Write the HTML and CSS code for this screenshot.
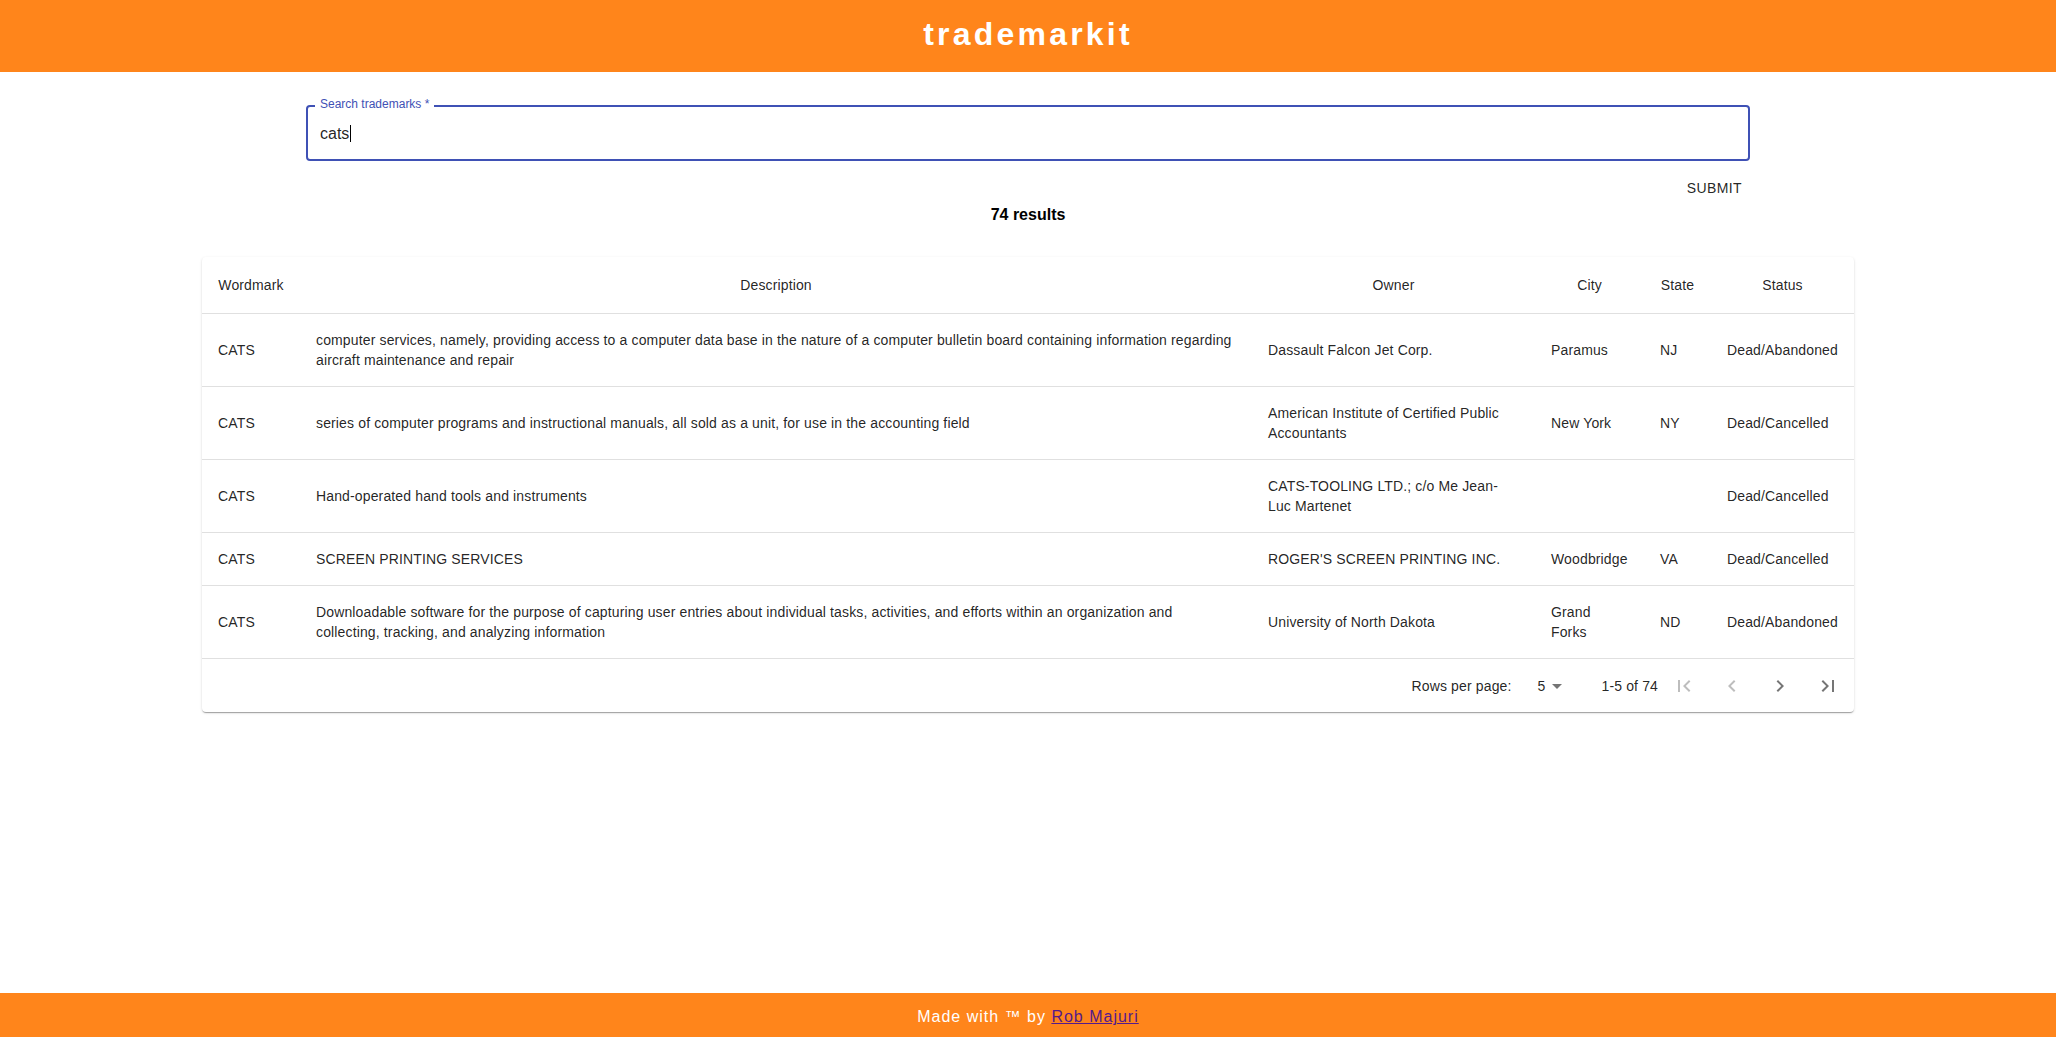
FILE: index.html
```html
<!DOCTYPE html>
<html lang="en">
<head>
<meta charset="utf-8">
<title>trademarkit</title>
<link rel="stylesheet" href="styles.css">
</head>
<body>
<header class="app-header">
  <h1 class="brand">trademarkit</h1>
</header>
<main class="content">
  <form class="search">
    <div class="field">
      <span class="field-label">Search trademarks *</span>
      <div class="field-value">cats<span class="caret"></span></div>
    </div>
    <div class="search-actions">
      <button type="button" class="submit">Submit</button>
    </div>
  </form>
  <p class="count">74 results</p>
  <div class="paper">
    <table class="results">
      <colgroup>
        <col class="c-word">
        <col class="c-desc">
        <col class="c-owner">
        <col class="c-city">
        <col class="c-state">
        <col class="c-status">
      </colgroup>
      <thead>
        <tr>
          <th>Wordmark</th>
          <th>Description</th>
          <th>Owner</th>
          <th>City</th>
          <th>State</th>
          <th>Status</th>
        </tr>
      </thead>
      <tbody>
        <tr>
          <td>CATS</td>
          <td>computer services, namely, providing access to a computer data base in the nature of a computer bulletin board containing information regarding aircraft maintenance and repair</td>
          <td>Dassault Falcon Jet Corp.</td>
          <td>Paramus</td>
          <td>NJ</td>
          <td>Dead/Abandoned</td>
        </tr>
        <tr>
          <td>CATS</td>
          <td>series of computer programs and instructional manuals, all sold as a unit, for use in the accounting field</td>
          <td>American Institute of Certified Public Accountants</td>
          <td>New York</td>
          <td>NY</td>
          <td>Dead/Cancelled</td>
        </tr>
        <tr>
          <td>CATS</td>
          <td>Hand-operated hand tools and instruments</td>
          <td>CATS-TOOLING LTD.; c/o Me Jean-Luc Martenet</td>
          <td></td>
          <td></td>
          <td>Dead/Cancelled</td>
        </tr>
        <tr>
          <td>CATS</td>
          <td>SCREEN PRINTING SERVICES</td>
          <td>ROGER'S SCREEN PRINTING INC.</td>
          <td>Woodbridge</td>
          <td>VA</td>
          <td>Dead/Cancelled</td>
        </tr>
        <tr>
          <td>CATS</td>
          <td>Downloadable software for the purpose of capturing user entries about individual tasks, activities, and efforts within an organization and collecting, tracking, and analyzing information</td>
          <td>University of North Dakota</td>
          <td>Grand Forks</td>
          <td>ND</td>
          <td>Dead/Abandoned</td>
        </tr>
      </tbody>
    </table>
    <div class="pagination">
      <span class="pg-caption">Rows per page:</span>
      <span class="pg-select">
        <span class="pg-select-value">5</span>
        <svg class="pg-caret" viewBox="0 0 24 24" width="24" height="24"><path d="M7 10l5 5 5-5z"/></svg>
      </span>
      <span class="pg-range">1-5 of 74</span>
      <span class="pg-actions">
        <span class="pg-btn is-disabled"><svg viewBox="0 0 24 24" width="24" height="24"><path d="M18.41 16.59L13.82 12l4.59-4.59L17 6l-6 6 6 6zM6 6h2v12H6z"/></svg></span>
        <span class="pg-btn is-disabled"><svg viewBox="0 0 24 24" width="24" height="24"><path d="M15.41 7.41L14 6l-6 6 6 6 1.41-1.41L10.83 12z"/></svg></span>
        <span class="pg-btn"><svg viewBox="0 0 24 24" width="24" height="24"><path d="M10 6L8.59 7.41 13.17 12l-4.58 4.59L10 18l6-6z"/></svg></span>
        <span class="pg-btn"><svg viewBox="0 0 24 24" width="24" height="24"><path d="M5.59 7.41L10.18 12l-4.59 4.59L7 18l6-6-6-6zM16 6h2v12h-2z"/></svg></span>
      </span>
    </div>
  </div>
</main>
<footer class="app-footer">
  <span>Made with ™ by <a class="author" href="#">Rob Majuri</a></span>
</footer>
</body>
</html>
```

FILE: styles.css
```css
* { box-sizing: border-box; }

html, body {
  margin: 0;
  padding: 0;
  background: #fff;
}

body {
  font-family: "Liberation Sans", Arial, sans-serif;
  color: rgba(0, 0, 0, 0.87);
  min-height: 100vh;
  display: flex;
  flex-direction: column;
}

.app-header {
  height: 72px;
  background: #ff851b;
  display: flex;
  align-items: center;
  justify-content: center;
  padding-bottom: 4px;
}

.brand {
  margin: 0;
  font-size: 32px;
  font-weight: 700;
  letter-spacing: 3.2px;
  color: #fff;
  line-height: 1;
}

.content {
  flex: 1;
}

.search {
  width: 1444px;
  margin: 0 auto;
  padding-top: 33px;
}

.field {
  position: relative;
  height: 56px;
  border: 2px solid #3f51b5;
  border-radius: 4px;
  display: flex;
  align-items: center;
  padding: 0 12px;
}

.field-label {
  position: absolute;
  left: 7px;
  top: -9px;
  padding: 0 5px;
  background: #fff;
  font-size: 12px;
  line-height: 12px;
  color: #3f51b5;
}

.field-value {
  font-size: 16px;
  line-height: 19px;
  color: rgba(0, 0, 0, 0.87);
  display: flex;
  align-items: center;
}

.caret {
  display: inline-block;
  width: 1px;
  height: 17px;
  background: #000;
  margin-left: 1px;
  margin-top: 1px;
}

.search-actions {
  display: flex;
  justify-content: flex-end;
  margin-top: 9px;
}

.submit {
  height: 36px;
  padding: 6px 8px;
  border: 0;
  background: transparent;
  font-family: "Liberation Sans", Arial, sans-serif;
  font-size: 14px;
  text-transform: uppercase;
  letter-spacing: 0.4px;
  color: rgba(0, 0, 0, 0.87);
  cursor: pointer;
}

.count {
  margin: 0;
  text-align: center;
  font-size: 16px;
  line-height: 18px;
  font-weight: 700;
  color: #000;
}

.paper {
  width: 1652px;
  margin: 33px auto 0;
  background: #fff;
  border-radius: 4px;
  box-shadow: 0 2px 1px -1px rgba(0, 0, 0, 0.2),
              0 1px 1px 0 rgba(0, 0, 0, 0.14),
              0 1px 3px 0 rgba(0, 0, 0, 0.12);
}

.results {
  width: 100%;
  border-collapse: collapse;
  table-layout: fixed;
  font-size: 14px;
  letter-spacing: 0.14px;
}

.c-word { width: 98px; }
.c-desc { width: 952px; }
.c-owner { width: 283px; }
.c-city { width: 109px; }
.c-state { width: 67px; }
.c-status { width: 143px; }

.results th,
.results td {
  padding: 16px;
  border-bottom: 1px solid #e0e0e0;
  color: rgba(0, 0, 0, 0.87);
  vertical-align: middle;
}

.results th {
  font-weight: 500;
  line-height: 24px;
  text-align: center;
}

.results td {
  text-align: left;
  line-height: 20px;
}

.pagination {
  height: 53px;
  display: flex;
  align-items: center;
  justify-content: flex-end;
  padding-right: 2px;
  font-size: 14px;
  letter-spacing: 0.14px;
  color: rgba(0, 0, 0, 0.87);
}

.pg-select {
  display: flex;
  align-items: center;
  margin-left: 26px;
  margin-right: 32px;
}

.pg-caret {
  fill: rgba(0, 0, 0, 0.54);
}

.pg-actions {
  display: flex;
  margin-left: 2px;
}

.pg-btn {
  width: 48px;
  height: 48px;
  display: flex;
  align-items: center;
  justify-content: center;
  fill: rgba(0, 0, 0, 0.54);
}

.pg-btn.is-disabled {
  fill: rgba(0, 0, 0, 0.26);
}

.app-footer {
  height: 44px;
  background: #ff851b;
  display: flex;
  align-items: center;
  justify-content: center;
  padding-top: 4px;
  font-size: 16px;
  letter-spacing: 1px;
  color: #fff;
}

.author {
  color: #551a8b;
}
```
